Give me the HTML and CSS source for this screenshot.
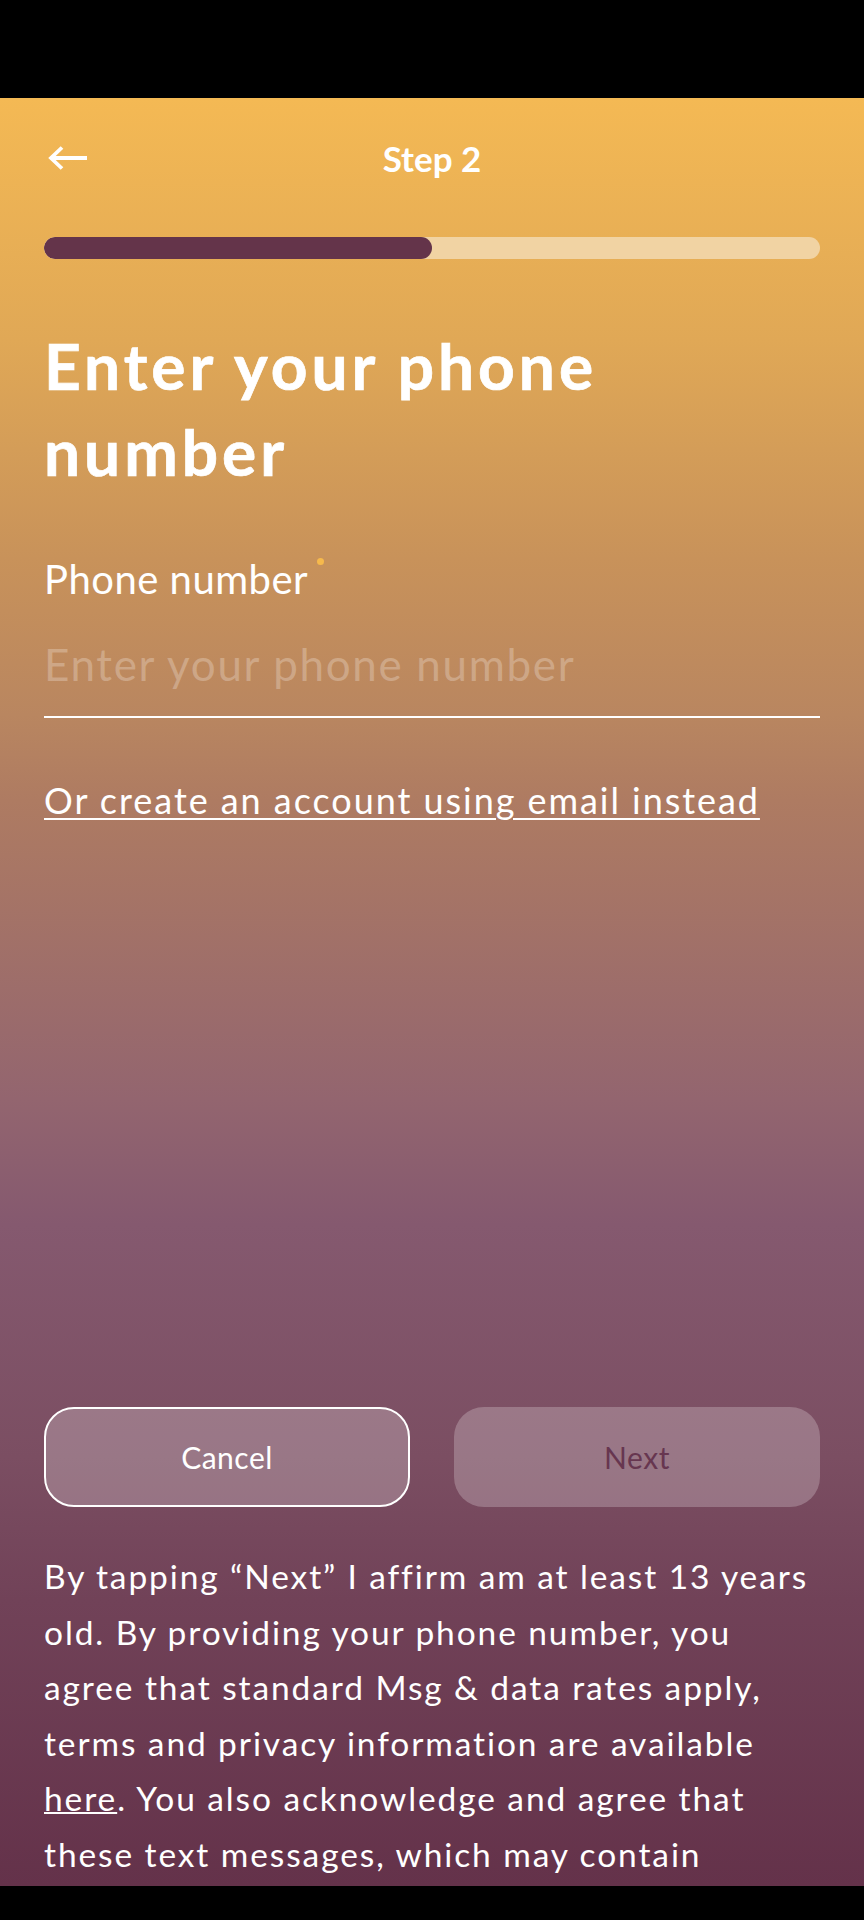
FILE: index.html
```html
<!DOCTYPE html>
<html>
<head>
    <title>Step 2 - Enter your phone number</title>
    <link rel="stylesheet" href="styles.css">
</head>
<body>
    <div class="status-bar"></div>
    <div class="screen">
        <header class="top-bar">
            <a class="back" href="#" aria-label="Back">
                <svg width="42" height="26" viewBox="0 0 42 26">
                    <path d="M14 2.5 L3 13 L14 23.5 M3 13 H39" fill="none" stroke="#fff" stroke-width="3.8"/>
                </svg>
            </a>
            <span class="step-title">Step 2</span>
            <span></span>
        </header>

        <div class="progress">
            <div class="progress-fill" style="width: 50%"></div>
        </div>

        <h1 class="heading">Enter your phone number</h1>

        <form name="formPhone" class="phone-form">
            <label for="fphone" class="field-label">Phone number<span class="required-dot"></span></label>
            <input type="tel" id="fphone" name="fphone" class="phone-input" placeholder="Enter your phone number">
        </form>

        <a href="#" class="email-link">Or create an account using email instead</a>

        <div class="actions">
            <button type="button" class="btn btn-cancel">Cancel</button>
            <button type="button" class="btn btn-next" disabled>Next</button>
        </div>

        <p class="disclaimer">
            By tapping &ldquo;Next&rdquo; I affirm am at least 13 years old. By providing your phone number, you agree that standard Msg &amp; data rates apply, terms and privacy information are available <a href="#">here</a>. You also acknowledge and agree that these text messages, which may contain
        </p>
    </div>
</body>
</html>
```

FILE: styles.css
```css
body {
    margin: 0;
    background-color: #000;
    font-family: "Lato", "Open Sans", sans-serif;
    color: #fff;
}

.status-bar {
    height: 98px;
    background-color: #000;
}

.screen {
    height: 1788px;
    overflow: hidden;
    padding: 0 44px;
    box-sizing: border-box;
    background: linear-gradient(180deg,
        #f4b954 0%,
        #e0a856 13.5%,
        #c8925a 25.8%,
        #b98660 34.5%,
        #ae7b62 39.3%,
        #93656f 56%,
        #85596f 63%,
        #7b4e62 76%,
        #714258 84%,
        #64324a 100%);
}

.top-bar {
    height: 119px;
    display: grid;
    grid-template-columns: 1fr auto 1fr;
    align-items: center;
}

.back {
    display: flex;
    margin-left: 4px;
}

.step-title {
    font-size: 35px;
    font-weight: 700;
    line-height: 1.2;
}

.progress {
    margin-top: 20px;
    height: 22px;
    border-radius: 11px;
    background-color: #f1d3a3;
    overflow: hidden;
}

.progress-fill {
    height: 100%;
    border-radius: 11px;
    background-color: #64344a;
}

.heading {
    margin: 64px 0 0;
    font-size: 64px;
    font-weight: 700;
    line-height: 86px;
    letter-spacing: 4px;
    -webkit-text-stroke: 0.7px #fff;
    width: 640px;
}

.phone-form {
    margin: 0;
}

.field-label {
    display: inline-flex;
    align-items: flex-start;
    margin-top: 60px;
    font-size: 40px;
    line-height: 1.2;
    letter-spacing: 0.5px;
}

.required-dot {
    width: 7px;
    height: 7px;
    margin: 3px 0 0 9px;
    border-radius: 50%;
    background-color: #f6b94c;
}

.phone-input {
    display: block;
    width: 100%;
    height: 53px;
    margin-top: 34px;
    padding: 0 0 26px;
    border: none;
    border-bottom: 2px solid #fff;
    background: transparent;
    font-family: inherit;
    font-size: 44px;
    line-height: 1.2;
    letter-spacing: 1.65px;
    color: #fff;
    outline: none;
}

.phone-input::placeholder {
    color: rgba(255, 255, 255, 0.26);
}

.email-link {
    display: inline-block;
    margin-top: 61px;
    font-size: 36px;
    line-height: 1.2;
    letter-spacing: 1.95px;
    color: #fff;
    text-decoration: underline;
    text-decoration-thickness: 2px;
    text-underline-offset: 4px;
}

.actions {
    margin-top: 585px;
    display: grid;
    grid-template-columns: 1fr 1fr;
    gap: 44px;
}

.btn {
    height: 100px;
    border-radius: 30px;
    border: 2px solid transparent;
    background-color: rgba(255, 255, 255, 0.23);
    font-family: inherit;
    font-size: 30px;
    letter-spacing: 0.5px;
    color: #fff;
}

.btn-cancel {
    border-color: #fff;
}

.btn-next {
    color: #673650;
}

.disclaimer {
    margin: 42px 0 0;
    font-size: 33.5px;
    line-height: 55.5px;
    letter-spacing: 1.9px;
}

.disclaimer a {
    color: #fff;
    text-decoration-thickness: 2px;
}
```
